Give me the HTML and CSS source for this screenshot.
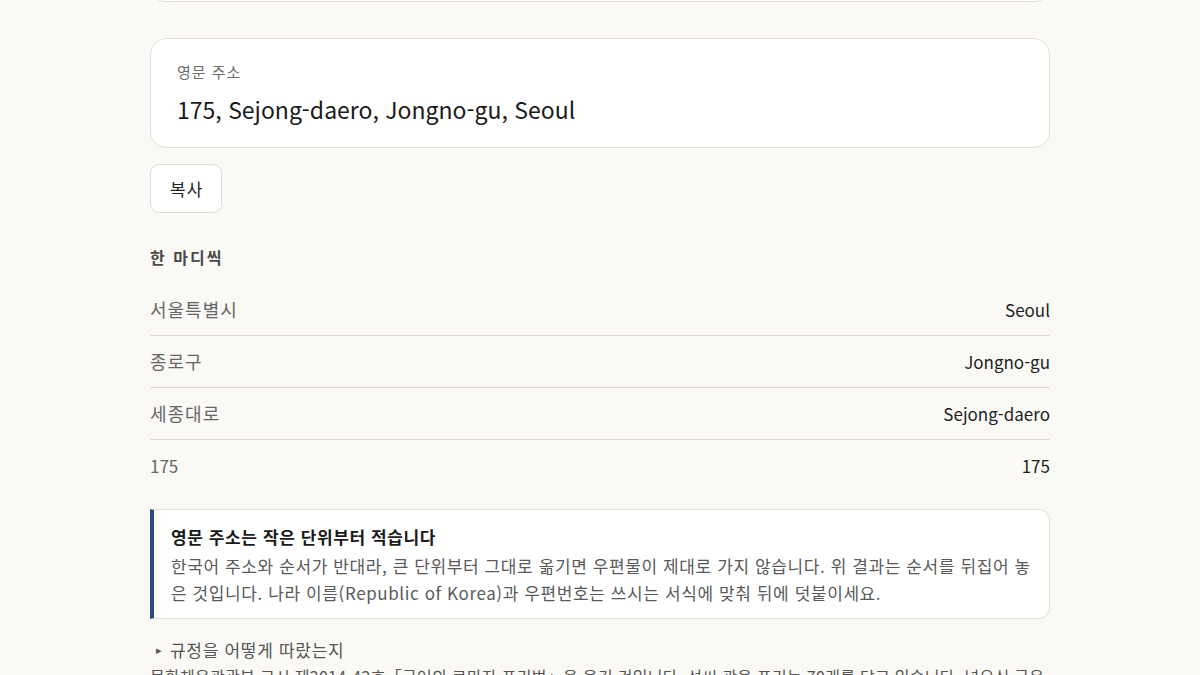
FILE: index.html
```html
<!DOCTYPE html>
<html lang="ko">
<head>
<meta charset="utf-8">
<title>로마자 변환</title>
<link rel="stylesheet" href="styles.css">
</head>
<body>
<main class="page">
  <div class="input-box"></div>

  <section class="result-card">
    <div class="result-label">영문 주소</div>
    <div class="result-value">175, Sejong-daero, Jongno-gu, Seoul</div>
  </section>

  <button class="copy-btn" type="button">복사</button>

  <h2 class="section-title">한 마디씩</h2>
  <ul class="parts">
    <li class="part"><span class="part-ko">서울특별시</span><span class="part-en">Seoul</span></li>
    <li class="part"><span class="part-ko">종로구</span><span class="part-en">Jongno-gu</span></li>
    <li class="part"><span class="part-ko">세종대로</span><span class="part-en">Sejong-daero</span></li>
    <li class="part"><span class="part-ko part-num">175</span><span class="part-en">175</span></li>
  </ul>

  <aside class="note">
    <div class="note-title">영문 주소는 작은 단위부터 적습니다</div>
    <p class="note-body">한국어 주소와 순서가 반대라, 큰 단위부터 그대로 옮기면 우편물이 제대로 가지 않습니다. 위 결과는 순서를 뒤집어 놓은 것입니다. 나라 이름(Republic of Korea)과 우편번호는 쓰시는 서식에 맞춰 뒤에 덧붙이세요.</p>
  </aside>

  <details class="rules" open>
    <summary class="rules-summary">규정을 어떻게 따랐는지</summary>
    <p class="rules-body">문화체육관광부 고시 제2014-42호「국어의 로마자 표기법」을 옮긴 것입니다. 성씨 관용 표기는 70개를 담고 있습니다. 넣으신 글은 브라우저 안에서만 처리되며 어디에도 보내지 않습니다.</p>
  </details>
</main>
</body>
</html>
```

FILE: styles.css
```css
* { box-sizing: border-box; }

html, body {
  margin: 0;
  padding: 0;
  background: #faf9f6;
}

body {
  font-family: "Noto Sans CJK KR", "Noto Sans", sans-serif;
  color: #1c1c1c;
  overflow: hidden;
}

.page {
  width: 900px;
  margin: 0 auto;
  display: flex;
  flex-direction: column;
  align-items: stretch;
}

.input-box {
  height: 120px;
  margin-top: -118px;
  background: #ffffff;
  border: 1px solid #e4e0d8;
  border-radius: 14px;
}

.result-card {
  margin-top: 36px;
  background: #ffffff;
  border: 1px solid #e4e0d8;
  border-radius: 16px;
  padding: 22px 26px 20px;
}

.result-label {
  font-size: 15px;
  line-height: 22px;
  color: #6b6b6b;
  letter-spacing: 1px;
}

.result-value {
  margin-top: 8px;
  font-size: 23px;
  line-height: 36px;
  color: #1a1a1a;
}

.copy-btn {
  align-self: flex-start;
  margin-top: 16px;
  font-family: inherit;
  font-size: 17px;
  line-height: 25px;
  letter-spacing: 1px;
  padding: 11px 18px 11px 19px;
  color: #222;
  background: #ffffff;
  border: 1px solid #e0dcd3;
  border-radius: 9px;
}

.section-title {
  margin: 32px 0 0;
  font-size: 16px;
  line-height: 24px;
  font-weight: 700;
  color: #4a4a4a;
  letter-spacing: 2px;
}

.parts {
  list-style: none;
  margin: 15px 0 0;
  padding: 0;
}

.part {
  display: flex;
  justify-content: space-between;
  align-items: center;
  padding: 12px 0;
  font-size: 18px;
  line-height: 27px;
  border-bottom: 1px solid #dedad3;
}

.part:last-child { border-bottom: none; }

.part-ko { color: #666; letter-spacing: 1px; }
.part-num { letter-spacing: 0; font-size: 17px; }
.part-en { color: #1e1e1e; font-size: 17px; }

.note {
  margin-top: 18px;
  background: #ffffff;
  border: 1px solid #e4e0d8;
  border-left: 4px solid #2b4a82;
  border-radius: 0 12px 12px 0;
  padding: 13px 16px 12px 17px;
  letter-spacing: 0.6px;
}

.note-title {
  font-size: 17px;
  line-height: 27px;
  font-weight: 700;
  color: #1a1a1a;
  margin-bottom: 2px;
}

.note-body {
  margin: 0;
  font-size: 17px;
  line-height: 27px;
  color: #5a5a5a;
}

.rules {
  margin-top: 17px;
}

.rules-summary {
  font-size: 17px;
  line-height: 27px;
  color: #555;
  letter-spacing: 0.7px;
  list-style: none;
  display: flex;
  align-items: center;
  cursor: pointer;
}

.rules-summary::-webkit-details-marker { display: none; }

.rules-summary::before {
  content: "▸";
  font-size: 11px;
  color: #555;
  flex: 0 0 14px;
  padding-left: 6px;
  box-sizing: content-box;
}

.rules-body {
  margin: 0;
  font-size: 16px;
  line-height: 27px;
  color: #555;
  letter-spacing: 0.3px;
}
```
